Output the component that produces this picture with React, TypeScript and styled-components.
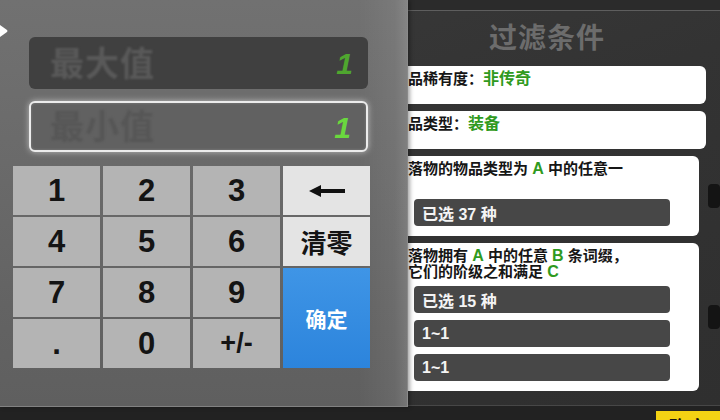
import React from "react";
import styled, { createGlobalStyle } from "styled-components";

const GlobalStyle = createGlobalStyle`
  html, body {
    margin: 0;
    padding: 0;
    background: #2a2a2a;
  }
  body {
    font-family: "Liberation Sans", "Noto Sans CJK SC", sans-serif;
    overflow: hidden;
  }
  * {
    box-sizing: border-box;
  }
`;

const Screen = styled.div`
  position: relative;
  width: 720px;
  height: 420px;
  overflow: hidden;
  display: flex;
  flex-direction: column;
  background: #2c2c2c;
`;

const TopStrip = styled.div`
  height: 11px;
  flex-shrink: 0;
  background: #2b2b2b;
  border-bottom: 1px solid #5e5e5e;
`;

const Main = styled.div`
  flex: 1;
  display: flex;
  flex-direction: column;
  padding: 4px 0 0 376px;
  background: linear-gradient(160deg, #3a3a3a 0%, #333 45%, #2f2f2f 100%);
`;

const Title = styled.div`
  width: 330px;
  height: 48px;
  line-height: 48px;
  padding-left: 12px;
  margin-bottom: 3px;
  text-align: center;
  font-size: 28px;
  font-weight: 700;
  color: #6c6c6c;
  letter-spacing: 1px;
`;

const CardList = styled.div`
  display: flex;
  flex-direction: column;
  gap: 7px;
`;

const CardRow = styled.div`
  display: flex;
  align-items: center;
  gap: 9px;
`;

const Card = styled.div<{ $height: number }>`
  width: 330px;
  min-height: ${(p) => p.$height}px;
  background: #ffffff;
  border-radius: 6px;
  padding: 5px 14px 9px 17px;
  display: flex;
  flex-direction: column;
`;

const CardLine = styled.div`
  font-size: 15px;
  line-height: 16px;
  font-weight: 700;
  color: #161616;
  white-space: nowrap;
`;

const Accent = styled.span`
  color: #2f9a20;
  font-size: 16px;
`;

const Pill = styled.div<{ $first?: boolean }>`
  height: 27px;
  margin: ${(p) => (p.$first ? 6 : 7)}px 15px 0 21px;
  background: #474747;
  border-radius: 4px;
  padding-left: 8px;
  display: flex;
  align-items: center;
  font-size: 16px;
  font-weight: 700;
  color: #f4f4f4;
`;

const SideTab = styled.div`
  width: 12px;
  height: 24px;
  border-radius: 4px;
  background: #141414;
  flex-shrink: 0;
`;

const BottomBar = styled.div`
  height: 15px;
  flex-shrink: 0;
  background: #222;
  border-top: 1px solid #474747;
  display: flex;
  justify-content: flex-end;
  overflow: hidden;
`;

const YellowButton = styled.div`
  width: 64px;
  height: 30px;
  margin-top: 5px;
  background: #f3d214;
  color: #111;
  font-size: 19px;
  font-weight: 700;
  text-align: center;
  padding-top: 2px;
`;

/* keypad overlay */

const Overlay = styled.div`
  position: absolute;
  left: 0;
  top: 0;
  width: 408px;
  height: 407px;
  background:
    linear-gradient(to right, rgba(255, 255, 255, 0) 0%, rgba(255, 255, 255, 0) 88%, rgba(255, 255, 255, 0.06) 97%, rgba(255, 255, 255, 0.14) 100%),
    linear-gradient(to bottom, #717171 0%, #6a6a6a 40%, #636363 75%, #5f5f5f 100%);
  border-right: 1px solid #8a8a8a;
  border-bottom: 1px solid #828282;
  display: flex;
  flex-direction: column;
  padding: 37px 0 0 13px;
  box-shadow: 2px 0 4px rgba(0, 0, 0, 0.35);
`;

const BackMark = styled.svg`
  position: absolute;
  left: 0;
  top: 25px;
`;

const ValueBox = styled.div<{ $active?: boolean }>`
  width: 339px;
  height: ${(p) => (p.$active ? 51 : 52)}px;
  margin-left: 16px;
  border-radius: 6px;
  display: flex;
  align-items: center;
  justify-content: space-between;
  padding: 0 15px 4px 19px;
  background: ${(p) => (p.$active ? "#616161" : "#404040")};
  border: ${(p) => (p.$active ? "2px solid #ececec" : "none")};
  box-shadow: ${(p) =>
    p.$active ? "0 0 6px rgba(255,255,255,0.55), inset 0 0 3px rgba(255,255,255,0.2)" : "none"};
  margin-bottom: ${(p) => (p.$active ? 14 : 12)}px;
`;

const BoxLabel = styled.div<{ $active?: boolean }>`
  font-size: 34px;
  font-weight: 700;
  letter-spacing: 1px;
  color: ${(p) => (p.$active ? "#565656" : "#595959")};
  filter: blur(0.8px);
  padding-left: ${(p) => (p.$active ? 0 : 2)}px;
`;

const BoxValue = styled.div<{ $active?: boolean }>`
  font-size: 30px;
  font-weight: 700;
  font-style: italic;
  color: ${(p) => (p.$active ? "#6ad83e" : "#4fa62f")};
  padding-top: 6px;
`;

const Keypad = styled.div`
  width: 357px;
  display: grid;
  grid-template-columns: repeat(4, 87px);
  grid-template-rows: repeat(4, 49px);
  gap: 2px 3px;
`;

const Key = styled.div<{ $variant?: "digit" | "light" | "confirm"; $size?: number }>`
  display: flex;
  align-items: center;
  justify-content: center;
  font-size: ${(p) => p.$size ?? 31}px;
  font-weight: 700;
  color: ${(p) => (p.$variant === "confirm" ? "#ffffff" : "#141414")};
  background: ${(p) =>
    p.$variant === "confirm"
      ? "linear-gradient(to bottom, #3f95e6, #2c84dc)"
      : p.$variant === "light"
      ? "#e4e4e4"
      : "#b4b4b4"};
  grid-row: ${(p) => (p.$variant === "confirm" ? "span 2" : "auto")};
`;

const BackArrow = () => (
  <svg width="36" height="14" viewBox="0 0 36 14">
    <polygon points="0,7 12,1 12,13" fill="#111" />
    <rect x="10" y="5" width="26" height="4" fill="#111" />
  </svg>
);

const App: React.FC = () => {
  return (
    <>
      <GlobalStyle />
      <Screen>
        <TopStrip />
        <Main>
          <Title>过滤条件</Title>
          <CardList>
            <CardRow>
              <Card $height={38}>
                <CardLine>
                  物品稀有度：<Accent>非传奇</Accent>
                </CardLine>
              </Card>
            </CardRow>
            <CardRow>
              <Card $height={38}>
                <CardLine>
                  物品类型：<Accent>装备</Accent>
                </CardLine>
              </Card>
            </CardRow>
            <CardRow>
              <Card $height={80}>
                <CardLine>
                  掉落物的物品类型为 <Accent>A</Accent> 中的任意一
                </CardLine>
                <CardLine>种</CardLine>
                <Pill $first>已选 37 种</Pill>
              </Card>
              <SideTab />
            </CardRow>
            <CardRow>
              <Card $height={148}>
                <CardLine>
                  掉落物拥有 <Accent>A</Accent> 中的任意 <Accent>B</Accent> 条词缀，
                </CardLine>
                <CardLine>
                  且它们的阶级之和满足 <Accent>C</Accent>
                </CardLine>
                <Pill $first>已选 15 种</Pill>
                <Pill>1~1</Pill>
                <Pill>1~1</Pill>
              </Card>
              <SideTab />
            </CardRow>
          </CardList>
        </Main>
        <BottomBar>
          <YellowButton>确定</YellowButton>
        </BottomBar>

        <Overlay>
          <BackMark width="8" height="12" viewBox="0 0 8 12">
            <path d="M0 0 L7 5 Q8 6 7 7 L0 12 Z" fill="#ffffff" />
          </BackMark>
          <ValueBox>
            <BoxLabel>最大值</BoxLabel>
            <BoxValue>1</BoxValue>
          </ValueBox>
          <ValueBox $active>
            <BoxLabel $active>最小值</BoxLabel>
            <BoxValue $active>1</BoxValue>
          </ValueBox>
          <Keypad>
            <Key>1</Key>
            <Key>2</Key>
            <Key>3</Key>
            <Key $variant="light">
              <BackArrow />
            </Key>
            <Key>4</Key>
            <Key>5</Key>
            <Key>6</Key>
            <Key $variant="light" $size={26}>
              清零
            </Key>
            <Key>7</Key>
            <Key>8</Key>
            <Key>9</Key>
            <Key $variant="confirm" $size={21}>
              确定
            </Key>
            <Key>.</Key>
            <Key>0</Key>
            <Key $size={27}>+/-</Key>
          </Keypad>
        </Overlay>
      </Screen>
    </>
  );
};

export default App;
